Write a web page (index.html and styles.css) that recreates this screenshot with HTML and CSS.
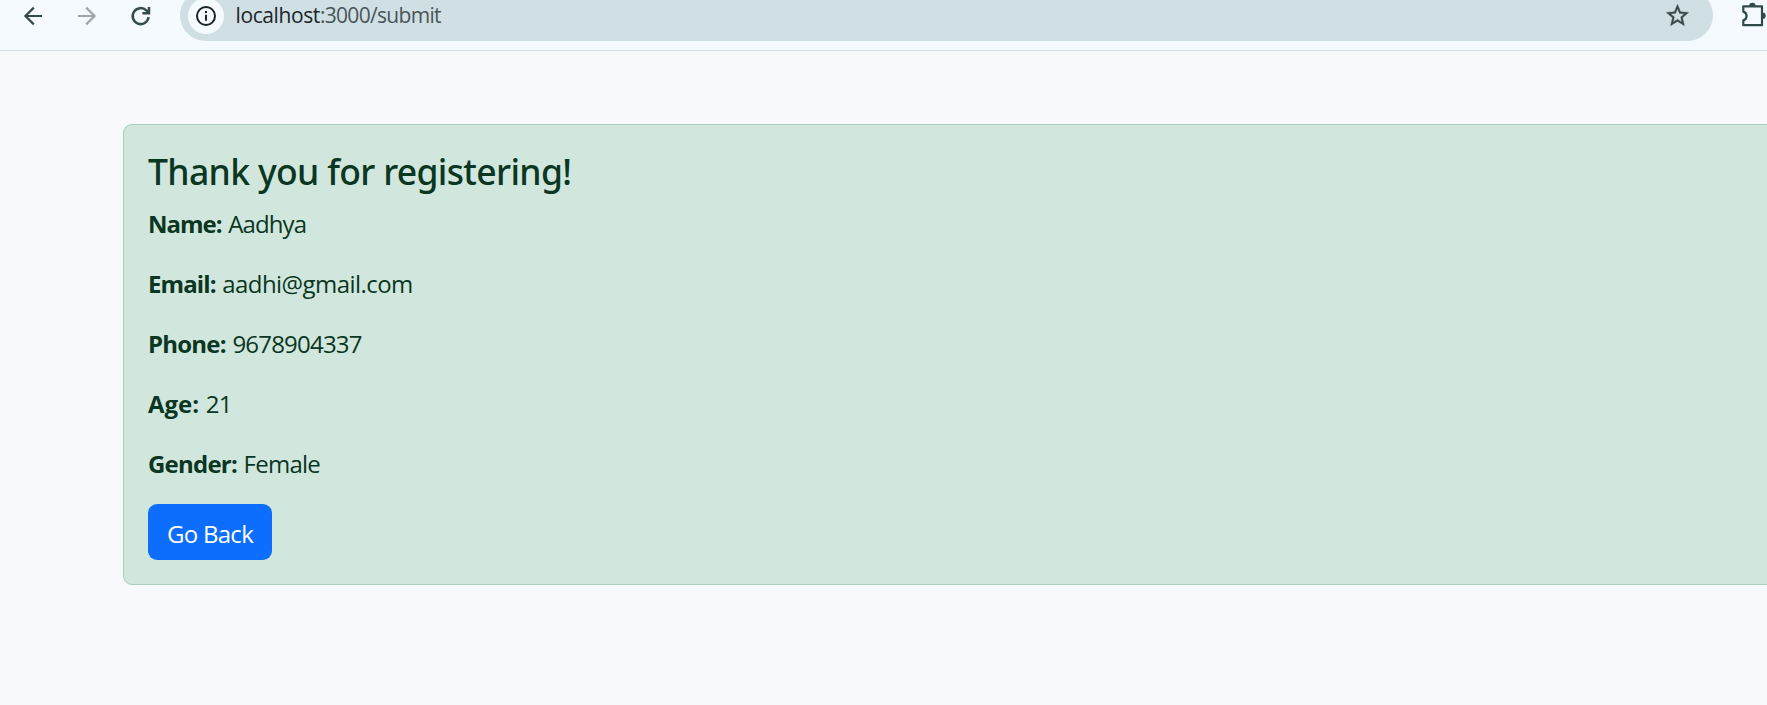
FILE: index.html
```html
<!DOCTYPE html>
<html lang="en">
<head>
<meta charset="utf-8">
<title>Registration</title>
<link rel="stylesheet" href="styles.css">
</head>
<body>
<header class="toolbar">
  <svg class="nav-icons" width="180" height="50" viewBox="0 0 180 50" fill="none" stroke="#354b4a" stroke-width="2.2">
    <path d="M42 16H26M33.8 7.6L25.4 16l8.4 8.4"/>
    <path stroke="#9da5a6" d="M78 16h16M86.2 7.6L94.6 16l-8.4 8.4"/>
    <path stroke-width="2.5" d="M148.6 17.2a8 8 0 1 1-2.3-6.8l2.5 2.5M149 7v6.2h-6.6"/>
  </svg>
  <div class="address">
    <span class="site-info">
      <svg width="22" height="22" viewBox="0 0 22 22" fill="none" stroke="#1c2426" stroke-width="2">
        <circle cx="11" cy="11" r="9"/>
        <path d="M11 9.8v6M11 6v2.1"/>
      </svg>
    </span>
    <span class="url"><span class="host">localhost</span><span class="path">:3000/submit</span></span>
    <svg class="star" width="27" height="27" viewBox="0 0 24 24" fill="#3c474a" stroke="#3c474a" stroke-width=".3">
      <path d="M22 9.24l-7.19-.62L12 2 9.19 8.63 2 9.24l5.46 4.73L5.82 21 12 17.27 18.18 21l-1.63-7.03L22 9.24zM12 15.4l-3.76 2.27 1-4.28-3.32-2.88 4.38-.38L12 6.1l1.71 4.04 4.38.38-3.32 2.88 1 4.28L12 15.4z"/>
    </svg>
  </div>
  <svg class="extensions" width="27" height="30" viewBox="0 0 27 30">
    <path fill="none" stroke="#2f4a49" stroke-width="2.2" stroke-linejoin="round" d="M3.3 6.3H22V25.2H3.3V20.4A4.6 4.6 0 0 0 3.3 11.6Z"/>
    <path fill="#2f4a49" d="M9.2 6a3.2 3.2 0 0 1 6.4 0zM22.5 12.6a3.2 3.2 0 0 1 0 6.4z"/>
  </svg>
</header>
<main class="page">
  <section class="alert">
    <h4 class="title">Thank you for registering!</h4>
    <p class="row"><strong class="name-label">Name:</strong><span class="name">Aadhya</span></p>
    <p class="row"><strong class="email-label">Email:</strong><span class="email">aadhi@gmail.com</span></p>
    <p class="row"><strong class="phone-label">Phone:</strong><span class="phone">9678904337</span></p>
    <p class="row"><strong class="age-label">Age:</strong><span class="age">21</span></p>
    <p class="row"><strong class="gender-label">Gender:</strong><span class="gender">Female</span></p>
    <a class="btn">Go Back</a>
  </section>
</main>
</body>
</html>
```
FILE: styles.css
```css
* { box-sizing: border-box; }
body {
  margin: 0;
  height: 705px;
  overflow: hidden;
  background: #f8f9fb;
  font-family: "Open Sans", "Noto Sans", sans-serif;
}
.toolbar {
  display: flex;
  align-items: flex-start;
  height: 51px;
  overflow: hidden;
  background: #f4fafd;
  border-bottom: 1px solid #d3e1e6;
}
.nav-icons { flex: none; }
.address {
  display: flex;
  align-items: center;
  flex: none;
  width: 1533px;
  height: 51px;
  margin-top: -10px;
  padding: 0 22px 0 8px;
  border-radius: 26px;
  background: #d0dfe4;
}
.site-info {
  display: flex;
  align-items: center;
  justify-content: center;
  width: 36px;
  height: 36px;
  border-radius: 50%;
  background: #f4fafd;
}
.url {
  flex: 1;
  margin-left: 11.5px;
  padding-bottom: 2px;
  font-size: 21px;
  line-height: 28px;
  white-space: nowrap;
}
.host { color: #1c2528; letter-spacing: -0.4px; }
.path { color: #4a5558; letter-spacing: -0.68px; }
.extensions { flex: none; margin-left: 27px; }
.page { padding: 73px 0 0 123px; }
.alert {
  width: 1680px;
  height: 461px;
  padding: 25px 24px 24px;
  border: 1px solid #a9cfbd;
  border-radius: 9px;
  background: #d1e7dd;
  color: #0a3622;
}
.title {
  margin: 0 0 12px;
  font-family: "Noto Sans", sans-serif;
  font-size: 35.5px;
  font-weight: 500;
  line-height: 43px;
  letter-spacing: -0.66px;
}
.row {
  display: flex;
  gap: 6.6px;
  margin: 0 0 24px;
  font-size: 24px;
  line-height: 37px;
  height: 36px;
}
.name-label { letter-spacing: -1px; }
.email-label { letter-spacing: -0.9px; }
.phone-label { letter-spacing: -0.78px; }
.age-label { letter-spacing: 0; }
.gender-label { letter-spacing: -0.78px; }
.name { letter-spacing: -0.9px; }
.email { letter-spacing: -0.55px; }
.phone, .age { letter-spacing: -0.8px; }
.gender { letter-spacing: -0.75px; }
.btn {
  display: flex;
  align-items: center;
  justify-content: center;
  width: 124px;
  height: 56px;
  margin-top: -1px;
  padding-top: 3px;
  border-radius: 9px;
  background: #0d6efd;
  color: #fff;
  font-size: 24px;
  letter-spacing: -0.7px;
}
```
